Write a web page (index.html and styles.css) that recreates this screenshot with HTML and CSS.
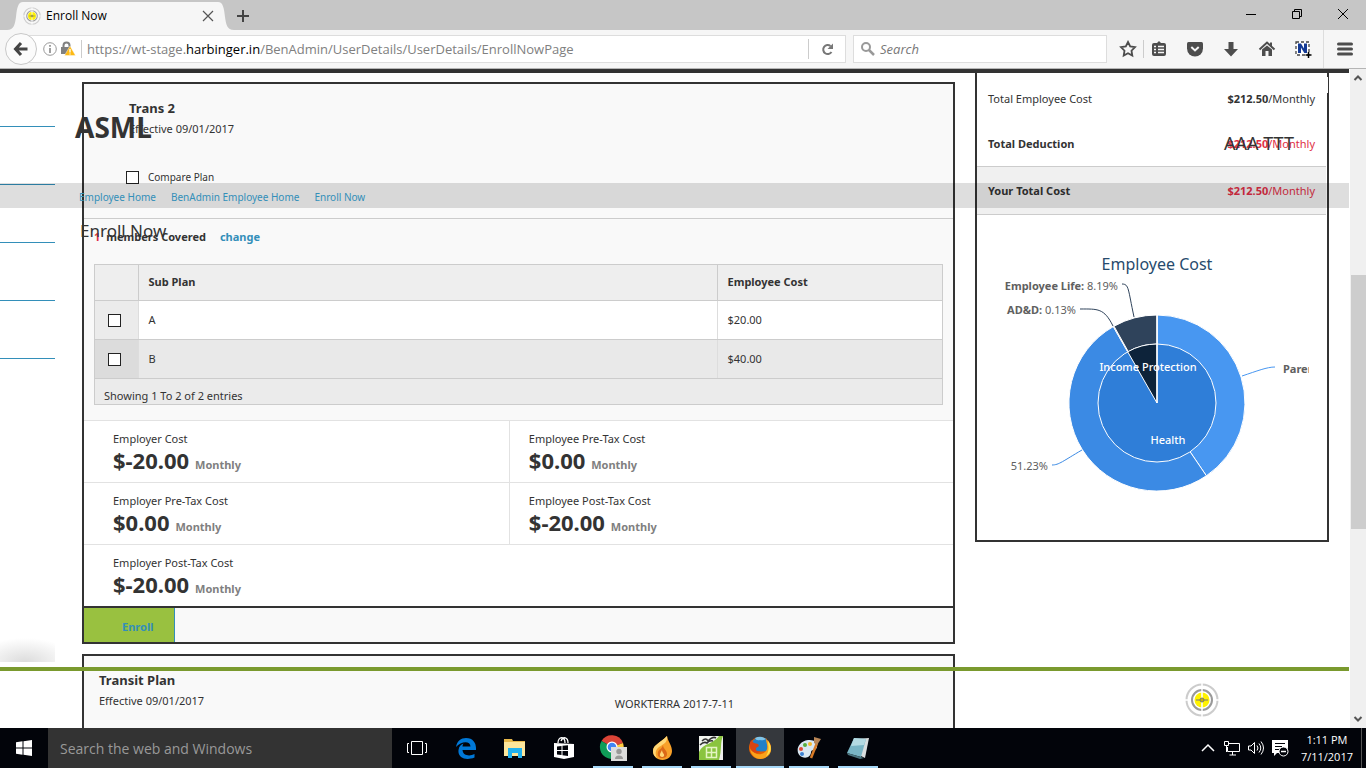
FILE: index.html
```html
<!DOCTYPE html>
<html lang="en">
<head>
    <meta charset="utf-8">
    <title>Enroll Now</title>
    <link rel="stylesheet" href="styles.css">
</head>
<body>
    <!-- browser window -->
    <div class="tabbar">
        <svg class="tab-edge" width="16" height="28" viewBox="0 0 16 28"><path d="M0 28C7 28 8 22 9 15C10 6 11 0 16 0V28Z" fill="#f6f6f6"/></svg>
        <div class="tab">
            <svg width="18" height="18" viewBox="0 0 34 34"><use href="#target"/></svg>
            <span class="tab-title">Enroll Now</span>
            <button class="plain" aria-label="Close tab"><svg width="12" height="12" viewBox="0 0 12 12"><path d="M1 1L11 11M11 1L1 11" stroke="#555" stroke-width="1.2"/></svg></button>
        </div>
        <svg class="tab-edge" width="16" height="28" viewBox="0 0 16 28"><path d="M16 28C9 28 8 22 7 15C6 6 5 0 0 0V28Z" fill="#f6f6f6"/></svg>
        <button class="plain new-tab" aria-label="New tab"><svg width="12" height="12" viewBox="0 0 12 12"><path d="M6 0V12M0 6H12" stroke="#444" stroke-width="2"/></svg></button>
        <div class="window-buttons">
            <button class="plain" aria-label="Minimize"><svg width="12" height="12" viewBox="0 0 12 12"><path d="M1 6.500H11" stroke="#000"/></svg></button>
            <button class="plain" aria-label="Restore"><svg width="12" height="12" viewBox="0 0 12 12"><path d="M1.500 3.500H8.500V10.500H1.500ZM3.500 3V1.500H10.500V8.500H9" stroke="#000" fill="none"/></svg></button>
            <button class="plain" aria-label="Close"><svg width="12" height="12" viewBox="0 0 12 12"><path d="M1 1L11 11M11 1L1 11" stroke="#000"/></svg></button>
        </div>
    </div>
    <div class="toolbar">
        <button class="back" aria-label="Back"><svg width="16" height="16" viewBox="0 0 16 16"><path d="M8 2L2.500 8L8 14M3 8H14.500" stroke="#444" stroke-width="3" fill="none"/></svg></button>
        <div class="address">
            <svg width="14" height="14" viewBox="0 0 14 14"><circle cx="7" cy="7" r="6.300" fill="none" stroke="#999"/><path d="M7 6V11M7 3V4.800" stroke="#888" stroke-width="1.600"/></svg>
            <svg width="16" height="16" viewBox="0 0 16 16"><path d="M3.500 7V4.500a3 3 0 0 1 6 0V7" fill="none" stroke="#808080" stroke-width="2"/><rect x="1" y="6" width="9" height="7" fill="#808080"/><path d="M10 5L15.500 14.500H4.500Z" fill="#fdb914" stroke="#fff" stroke-width=".4"/><path d="M10 8V11.500M10 12.500V13.500" stroke="#fff" stroke-width="1.300"/></svg>
            <div class="url" role="textbox" aria-label="Address">https://wt-stage.<span class="host">harbinger.in</span>/BenAdmin/UserDetails/UserDetails/EnrollNowPage</div>
            <button class="plain reload" aria-label="Reload"><svg width="13" height="13" viewBox="0 0 13 13"><path d="M10.500 9A4.500 4.500 0 1 1 9.500 3" stroke="#777" stroke-width="2" fill="none"/><path d="M12 0.500V6H6.500Z" fill="#777"/></svg></button>
        </div>
        <div class="search">
            <svg width="14" height="14" viewBox="0 0 14 14"><circle cx="5" cy="5" r="4" fill="none" stroke="#999" stroke-width="2"/><path d="M8 8L13 13" stroke="#999" stroke-width="2.500"/></svg>
            <input type="text" aria-label="Search" placeholder="Search">
        </div>
        <div class="tools">
            <button class="plain" aria-label="Bookmark"><svg width="18" height="18" viewBox="0 0 18 18"><path d="M9 2L11.200 6.500L16 7.200L12.500 10.700L13.300 15.500L9 13.200L4.700 15.500L5.500 10.700L2 7.200L6.800 6.500Z" fill="none" stroke="#4d4d4d" stroke-width="1.800"/></svg></button>
            <button class="plain" aria-label="Bookmarks list"><svg width="18" height="18" viewBox="0 0 18 18"><path d="M4 3H7L9 1L11 3H14Q16 3 16 5V14Q16 16 14 16H4Q2 16 2 14V5Q2 3 4 3Z" fill="#4d4d4d"/><path d="M4 6.500H6M8 6.500H14M4 9.500H6M8 9.500H14M4 12.500H6M8 12.500H14" stroke="#f6f6f6" stroke-width="1.700"/></svg></button>
            <button class="plain" aria-label="Pocket"><svg width="18" height="18" viewBox="0 0 18 18"><path d="M2.500 2H15.500Q17 2 17 3.500V8.500A8 8 0 0 1 1 8.500V3.500Q1 2 2.500 2Z" fill="#4d4d4d"/><path d="M5.300 7L9 10.400L12.700 7" fill="none" stroke="#f6f6f6" stroke-width="2"/></svg></button>
            <button class="plain" aria-label="Downloads"><svg width="18" height="18" viewBox="0 0 18 18"><path d="M6.500 2H11.500V9H16L9 16.500L2 9H6.500Z" fill="#4d4d4d"/></svg></button>
            <button class="plain" aria-label="Home"><svg width="18" height="18" viewBox="0 0 18 18"><path d="M1.500 9.500L9 2.500L16.500 9.500" stroke="#4d4d4d" stroke-width="2" fill="none"/><path d="M4 9.500L9 5.500L14 9.500V16H10.500V11H7.500V16H4ZM12 2.500H14V6H12Z" fill="#4d4d4d"/></svg></button>
            <button class="plain" aria-label="Clipper"><svg width="18" height="18" viewBox="0 0 18 18"><rect x="2" y="2" width="13" height="13" fill="#fff" stroke="#444" stroke-width="1.300" stroke-dasharray="3 2"/><path d="M4 13V3.500H7L10 8.500V3.500H13V13H10.300L7 7.500V13Z" fill="#143a94"/><path d="M14.500 12V18M11.500 15H17.500" stroke="#000" stroke-width="1.500"/></svg></button>
            <button class="plain menu" aria-label="Menu"><svg width="18" height="18" viewBox="0 0 18 18"><path d="M2.500 4H15.500M2.500 9H15.500M2.500 14H15.500" stroke="#4d4d4d" stroke-width="3" stroke-linecap="round"/></svg></button>
        </div>
    </div>

    <div class="viewport">
        <div class="page">
            <ul class="sidebar">
                <li></li><li></li><li></li><li></li><li></li>
            </ul>
            <main>
                <section class="plan">
                    <div class="plan-head">
                        <h3>Trans 2</h3>
                        <p>Effective 09/01/2017</p>
                        <div class="compare">
                            <input type="checkbox" id="compare"><label for="compare">Compare Plan</label>
                        </div>
                    </div>
                    <div class="plan-body">
                        <div class="members"><span class="red">1</span> <span>members Covered</span> <a href="#">change</a></div>
                        <div class="grid-box">
                            <table>
                                <thead>
                                    <tr><th class="check"></th><th>Sub Plan</th><th class="cost">Employee Cost</th></tr>
                                </thead>
                                <tbody>
                                    <tr><td class="check"><input type="checkbox" aria-label="A"></td><td>A</td><td>$20.00</td></tr>
                                    <tr><td class="check"><input type="checkbox" aria-label="B"></td><td>B</td><td>$40.00</td></tr>
                                </tbody>
                            </table>
                            <p class="entries">Showing 1 To 2 of 2 entries</p>
                        </div>
                    </div>
                    <div class="costs">
                        <div class="cost-item"><span>Employer Cost</span><div><strong>$-20.00</strong> <small>Monthly</small></div></div>
                        <div class="cost-item"><span>Employee Pre-Tax Cost</span><div><strong>$0.00</strong> <small>Monthly</small></div></div>
                        <div class="cost-item"><span>Employer Pre-Tax Cost</span><div><strong>$0.00</strong> <small>Monthly</small></div></div>
                        <div class="cost-item"><span>Employee Post-Tax Cost</span><div><strong>$-20.00</strong> <small>Monthly</small></div></div>
                        <div class="cost-item last"><span>Employer Post-Tax Cost</span><div><strong>$-20.00</strong> <small>Monthly</small></div></div>
                    </div>
                    <div class="actions"><a class="enroll" href="#">Enroll</a></div>
                </section>
                <section class="plan">
                    <div class="plan-head next">
                        <h3>Transit Plan</h3>
                        <p>Effective 09/01/2017</p>
                    </div>
                </section>
            </main>
            <aside>
                <div class="sum"><span>Total Employee Cost</span><span><b>$212.50</b>/Monthly</span></div>
                <div class="sum"><b>Total Deduction</b><span class="red"><b>$212.50</b>/Monthly</span></div>
                <div class="sum total"><b>Your Total Cost</b><span class="red"><b>$212.50</b>/Monthly</span></div>
                <svg class="chart" width="304" height="325" viewBox="0 0 304 325">
                    <text x="152" y="55" text-anchor="middle" class="chart-title">Employee Cost</text>
                    <g stroke="#fff">
                        <path d="M152 188V100A88 88 0 0 1 201.400 260.800Z" fill="#4897f1"/>
                        <path d="M152 188L201.400 260.800A88 88 0 1 1 108.300 111.600Z" fill="#3b8ae4"/>
                        <path d="M152 188L108.300 111.600A88 88 0 0 1 109 111.200Z" fill="#2f4259"/>
                        <path d="M152 188L109 111.200A88 88 0 0 1 152 100Z" fill="#2f435b"/>
                        <circle cx="152" cy="188" r="59" fill="#2f7ed8"/>
                        <path d="M152 188L122.700 136.800A59 59 0 0 1 152 129Z" fill="#0d233a"/>
                        <path d="M152 188V100" stroke-width="1.500"/>
                    </g>
                    <g fill="none">
                        <path d="M117 69C124 69 123 74 129 102" stroke="#2f435b"/>
                        <path d="M75 94C93 94 99 93 108 111" stroke="#2f435b"/>
                        <path d="M237 161C252 156 262 152 270 152" stroke="#4897f1"/>
                        <path d="M47 250C54 250 58 246 77 235" stroke="#3b8ae4"/>
                    </g>
                    <g class="chart-label">
                        <text x="113" y="75" text-anchor="end"><tspan class="bold">Employee Life:</tspan> 8.19%</text>
                        <text x="71" y="99" text-anchor="end"><tspan class="bold">AD&amp;D:</tspan> 0.13%</text>
                        <text x="278" y="158" class="bold">Parent Medical</text>
                        <text x="43" y="255" text-anchor="end">51.23%</text>
                        <text x="143" y="156" text-anchor="middle" class="in-pie">Income Protection</text>
                        <text x="163" y="229" text-anchor="middle" class="in-pie">Health</text>
                    </g>
                </svg>
            </aside>

            <!-- fixed header and footer layers -->
            <h1 class="company">ASML</h1>
            <div class="user">AAA TTT</div>
            <nav class="breadcrumbs">
                <a href="#">Employee Home</a>
                <a href="#">BenAdmin Employee Home</a>
                <a href="#">Enroll Now</a>
            </nav>
            <h2 class="page-title">Enroll Now</h2>
            <div class="top-menu"></div>
            <div class="menu-shadow"></div>
            <footer>
                <span></span>
                <span class="copyright">WORKTERRA 2017-7-11</span>
                <svg width="34" height="34" viewBox="0 0 34 34">
                    <g id="target" fill="none">
                        <circle cx="17" cy="17" r="15.500" stroke="#ccc" stroke-width="2"/>
                        <circle cx="17" cy="17" r="7.500" fill="#fff200"/>
                        <circle cx="17" cy="17" r="10" stroke="#999" stroke-width="2"/>
                        <path d="M17 0V34M0 17H6M28 17H34" stroke="#fff" stroke-width="1.500"/>
                        <path d="M11 17H23" stroke="#777"/>
                        <circle cx="17" cy="17" r="2" fill="#c9b800" stroke="#777"/>
                    </g>
                </svg>
            </footer>
        </div>
        <div class="scrollbar">
            <svg width="10" height="8" viewBox="0 0 10 8"><path d="M1.500 6L5 2.500L8.500 6" fill="none" stroke="#555" stroke-width="2"/></svg>
            <div class="thumb"></div>
            <svg width="10" height="8" viewBox="0 0 10 8"><path d="M1.500 2L5 5.500L8.500 2" fill="none" stroke="#555" stroke-width="2"/></svg>
        </div>
    </div>

    <div class="taskbar">
        <button class="task start" aria-label="Start"><svg width="16" height="16" viewBox="0 0 16 16"><path d="M0 2.200L6.500 1.300V7.500H0ZM7.500 1.200L16 0V7.500H7.500ZM0 8.500H6.500V14.700L0 13.800ZM7.500 8.500H16V16L7.500 14.800Z" fill="#fff"/></svg></button>
        <input class="task-search" type="text" aria-label="Search the web and Windows" placeholder="Search the web and Windows">
        <div class="tasks">
            <button class="task" aria-label="Task view"><svg width="24" height="24" viewBox="0 0 24 24"><path d="M6.500 5.500H17.500V18.500H6.500ZM4 7.500H2.500V16.500H4M20 7.500H21.500V16.500H20" fill="none" stroke="#fff"/></svg></button>
            <button class="task" aria-label="Edge"><svg width="24" height="24" viewBox="0 0 24 24"><path d="M2 11C3 5 7 2 12 2C19 2 22 7 22 12V14H8.500C9 20 16 20.500 20.500 18V21.500C12 25 3.500 22 4.500 14C5 10 7.500 8 9.500 7.500C8.700 8.500 8.500 9.500 8.500 10.500H16.500C16.500 4.500 7 5 2 11Z" fill="#0078d7"/></svg></button>
            <button class="task" aria-label="File Explorer"><svg width="24" height="24" viewBox="0 0 24 24"><path d="M1 3H9L10 5H22V20H1Z" fill="#e8b84a"/><path d="M1 6H22V20H1Z" fill="#fde69a"/><path d="M5 12H19V22H15V17H9V22H5Z" fill="#22b2ee"/></svg></button>
            <button class="task" aria-label="Store"><svg width="24" height="24" viewBox="0 0 24 24"><path d="M2 7L22 8V21L12 23L2 21Z" fill="#fff"/><path d="M6 7C6 0 13 0 13 7M9 5C11 0 16 1 16 7" stroke="#fff" stroke-width="1.300" fill="none"/><path d="M5 10.500L9.500 10V14H5ZM10.500 9.800L16 9.200V14H10.500ZM5 15H9.500V19L5 18.500ZM10.500 15H16V20L10.500 19.200Z" fill="#02040a"/></svg></button>
            <button class="task open" aria-label="Chrome"><svg width="28" height="26" viewBox="0 0 28 26"><path d="M13 12L2.500 6A12 12 0 0 1 24 8Z" fill="#db4437"/><path d="M13 12L2.500 6A12 12 0 0 0 12 24Z" fill="#0f9d58"/><path d="M13 12L24 8A12 12 0 0 1 12 24Z" fill="#ffcd40"/><circle cx="13" cy="12" r="5.500" fill="#fff"/><circle cx="13" cy="12" r="4.300" fill="#4285f4"/><path d="M12 12H28V26H12Z" fill="#ddd"/><circle cx="20" cy="16.500" r="2.700" fill="#999"/><path d="M16 24Q16 20.500 20 20.500T24 24Z" fill="#999"/></svg></button>
            <button class="task open" aria-label="Flame"><svg width="24" height="24" viewBox="0 0 24 24"><path d="M17 0C18 6 22 9 22 15C22 20 18 24 12.500 24S3 20 3 15C3 9 10 7 17 0Z" fill="#f8a12a"/><path d="M17 0C18 6 14 8 9 11C5 14 5 18 7 22C4 20 3 18 3 15C3 9 10 7 17 0Z" fill="#ffd776"/><path d="M13 9C13 13 17 14 17 18C17 21 15 22 12 22S7 20 8 16C9 13 12 13 13 9Z" fill="#db6918"/><path d="M12 14C12 17 15 18 14 20S9 21 10 18Z" fill="#ffd776"/></svg></button>
            <button class="task open" aria-label="Spreadsheet"><svg width="24" height="24" viewBox="0 0 24 24"><path d="M0 0H24V24H0Z" fill="#8ac43f"/><path d="M0 0H20C15 8 4 7 0 16Z" fill="#f1f4ef"/><path d="M24 0V24H20C23 14 21 6 24 0Z" fill="#eee"/><path d="M3 5Q7 1 9 5Q14 0 17 2M1 9Q5 5 8 7Q10 4 14 5" fill="none" stroke="#333" stroke-width="1.600"/><path d="M7.500 11.500H17.500V21.500H7.500ZM12.500 11.500V21.500M7.500 16.500H17.500" fill="none" stroke="#e4f5c2" stroke-width="1.500"/></svg></button>
            <button class="task open active" aria-label="Firefox"><svg width="24" height="24" viewBox="0 0 24 24"><circle cx="12" cy="12" r="11" fill="#e66000"/><path d="M4 6A10 10 0 0 1 20 5L19 15L8 16Z" fill="#2380c7"/><path d="M7 2Q13 -1 18 3Q15 5 12 4Q8 5 7 2Z" fill="#7cc3e9"/><path d="M18 3C25 9 25 18 17 22C9 25 3 20 2 13C6 18 13 21 18 15C21 11 18 7 18 3Z" fill="#f9a21b"/><path d="M20 5C24 10 24 17 18 20C22 14 20 10 20 5Z" fill="#ffe14d"/><path d="M3 4L6 7L10 8L11 10L8 12Q7 16 13 15Q9 19 4 15Q0 10 3 4Z" fill="#d94412"/></svg></button>
            <button class="task open" aria-label="Paint"><svg width="26" height="24" viewBox="0 0 26 24"><path d="M12 4C20 3 23 9 20 13C18 15 16 13 15 16C15 20 11 23 6 21C-1 18 0 6 12 4Z" fill="#d8e7f2"/><circle cx="5" cy="13" r="2" fill="#e04a35"/><circle cx="9" cy="9" r="2" fill="#56ad3c"/><circle cx="14" cy="8" r="2" fill="#f5b82e"/><circle cx="6" cy="18" r="2" fill="#3a80d2"/><path d="M21 7L15 22" stroke="#d77b27" stroke-width="2.500"/><path d="M18 1L25 3L21 9L18 7Z" fill="#b78455"/></svg></button>
            <button class="task open" aria-label="Notepad"><svg width="24" height="24" viewBox="0 0 24 24"><path d="M9 3L23 2L19 22L15 20Z" fill="#d9dedf"/><path d="M8 2L20 3L15 21L1 17Z" fill="#79b5c5"/><path d="M8 2L20 3L18 9L5 10Z" fill="#b4dae2"/><path d="M1 17L15 21L18 22L14 23L2 19Z" fill="#49747f"/></svg></button>
        </div>
        <div class="tray">
            <svg width="18" height="18" viewBox="0 0 18 18"><path d="M3 12L9 6L15 12" fill="none" stroke="#fff" stroke-width="1.500"/></svg>
            <svg width="18" height="18" viewBox="0 0 18 18"><path d="M5.500 4.500H16.500V12.500H4.500V8M9.500 12.500V16M6.500 16H13M1.500 2.500H5.500V6.500H1.500ZM3.500 6.500V13" fill="none" stroke="#fff"/></svg>
            <svg width="18" height="18" viewBox="0 0 18 18"><path d="M1.500 7H4L7.500 3.500V14.500L4 11H1.500ZM10 6.500Q12 9 10 11.500M12 4.500Q15.500 9 12 13.500M14 2.500Q19 9 14 15.500" fill="none" stroke="#fff"/></svg>
            <svg width="18" height="18" viewBox="0 0 18 18"><path d="M1 1H17V14H6L3 17V14H1Z" fill="#fff"/><path d="M4 4.500H14M4 7.500H11M4 10.500H8" stroke="#02040a"/><circle cx="12.500" cy="12.500" r="4.500" fill="#02040a" stroke="#fff"/><path d="M10 12.500H15" stroke="#fff" stroke-width="1.500"/></svg>
            <div class="clock"><div>1:11 PM</div><div>7/11/2017</div></div>
        </div>
    </div>
</body>
</html>
```
FILE: styles.css
```css
* {
    box-sizing: border-box;
}
body {
    margin: 0;
    height: 100vh;
    display: flex;
    flex-direction: column;
    overflow: hidden;
    font-family: "Noto Sans", "Open Sans", sans-serif;
    font-size: 11px;
    line-height: 18px;
    color: #333;
    background: #fff;
}
h1, h2, h3, p, ul {
    margin: 0;
    padding: 0;
}
a {
    color: #338fb9;
    text-decoration: none;
}
svg {
    flex: none;
    display: block;
}
.plain {
    border: 0;
    background: none;
    padding: 0;
}

/* browser window */
.tabbar {
    flex: none;
    height: 30px;
    display: flex;
    align-items: flex-end;
    background: #c6c6c6;
    padding-left: 7px;
}
.tab {
    width: 195px;
    height: 28px;
    display: flex;
    align-items: center;
    gap: 5px;
    padding-right: 4px;
    background: #f6f6f6;
    font-family: "Open Sans", sans-serif;
    font-size: 12px;
    color: #000;
}
.tab-title {
    flex: 1;
}
.new-tab {
    margin: 0 0 8px 3px;
}
.window-buttons {
    display: flex;
    gap: 34px;
    margin: 0 17px 10px auto;
}
.toolbar {
    flex: none;
    height: 39px;
    display: flex;
    align-items: center;
    background: #f6f6f6;
    border-bottom: 1px solid #b5b5b5;
    padding-left: 5px;
}
.back {
    width: 32px;
    height: 32px;
    border: 1px solid #c8c8c8;
    border-radius: 50%;
    background: #fbfbfb;
    padding: 0 0 0 7px;
    z-index: 1;
}
.address {
    flex: 1;
    height: 28px;
    display: flex;
    align-items: center;
    gap: 3px;
    margin-left: -14px;
    padding-left: 19px;
    background: #fff;
    border: 1px solid #ddd;
}
.url {
    flex: 1;
    border-left: 1px solid #ccc;
    margin-left: 2px;
    padding-left: 5px;
    font-family: "Open Sans", sans-serif;
    font-size: 13px;
    color: #808080;
    white-space: nowrap;
}
.host {
    color: #000;
}
.reload {
    width: 37px;
    height: 20px;
    border-left: 1px solid #ccc;
    padding-left: 12px;
}
.search {
    width: 254px;
    height: 28px;
    margin-left: 7px;
    padding-left: 7px;
    display: flex;
    align-items: center;
    gap: 5px;
    background: #fff;
    border: 1px solid #ddd;
}
.search input {
    flex: 1;
    min-width: 0;
    border: 0;
    padding: 0;
    font-family: "Open Sans", sans-serif;
    font-size: 13px;
    font-style: italic;
}
.search input::placeholder {
    color: #777;
}
.tools {
    display: flex;
    align-items: center;
    gap: 18px;
    padding: 0 12px;
}
.tools button:first-child {
    padding-right: 6px;
    border-right: 1px solid #ccc;
    margin-right: -12px;
}
.tools .menu {
    height: 38px;
    border-left: 1px solid #ddd;
    padding-left: 12px;
    margin-left: -7px;
}

/* page */
.viewport {
    flex: 1;
    min-height: 0;
    display: flex;
}
.page {
    flex: 1;
    position: relative;
    display: flex;
    align-items: flex-start;
    overflow: hidden;
    border-top: 4px solid #333;
    padding-right: 20px;
}
.sidebar {
    width: 55px;
    list-style: none;
    margin-top: -4px;
}
.sidebar li {
    height: 58px;
    border-bottom: 1px solid #338fb9;
}
main {
    flex: 1;
    padding-top: 9px;
    margin: 0 20px 0 27px;
}
.plan {
    border: 2px solid #333;
    background: #f9f9f9;
    margin-bottom: 10px;
}
.plan-head {
    height: 135px;
    border-bottom: 1px solid #ccc;
    padding: 12px 45px;
}
.plan-head h3 {
    font-size: 13px;
    line-height: 24px;
}
.plan-head.next {
    padding: 12px 15px;
}
input[type=checkbox] {
    appearance: none;
    width: 13px;
    height: 13px;
    margin: 0;
    border: 1px solid #222;
    background: #fff;
    vertical-align: middle;
}
.compare {
    display: flex;
    align-items: center;
    gap: 9px;
    margin: 30px 0 0 -3px;
    font-size: 10px;
}
.plan-body {
    padding: 9px 10px 15px;
}
.members {
    display: flex;
    gap: 6px;
    font-weight: bold;
    margin-bottom: 18px;
}
.members a {
    margin-left: 8px;
}
.red {
    color: #e02f46;
}
.grid-box {
    border: 1px solid #ccc;
    background: #ebebeb;
}
table {
    width: 100%;
    border-collapse: collapse;
}
th, td {
    height: 39px;
    padding: 0 10px;
    text-align: left;
    border-bottom: 1px solid #ccc;
}
th {
    height: 35px;
    background: #eee;
    border-right: 1px solid #ccc;
}
td {
    background: #fff;
    border-right: 1px solid #ddd;
}
tr:nth-child(even) td {
    background: #e9e9e9;
}
th:last-child, td:last-child {
    border-right: 0;
}
.check {
    width: 43px;
    padding-left: 13px;
    padding-right: 0;
}
td.check {
    background: #ebebeb;
}
tr:nth-child(even) td.check {
    background: #dcdcdc;
}
.cost {
    width: 225px;
}
.entries {
    padding: 9px 9px 0;
    line-height: 16px;
}
.costs {
    display: grid;
    grid-template-columns: 49fr 51fr;
    background: #fff;
}
.cost-item {
    height: 62px;
    border-top: 1px solid #e2e2e2;
    padding: 9px 19px;
}
.cost-item:nth-child(odd) {
    padding-left: 29px;
    border-right: 1px solid #e2e2e2;
}
.costs .last {
    grid-column: 1 / 3;
    border-right: 0;
}
.cost-item span {
    display: block;
}
.cost-item div {
    line-height: 24px;
}
.cost-item strong {
    font-size: 22px;
}
.cost-item small {
    font-size: 11px;
    font-weight: bold;
    color: #808080;
    margin-left: 3px;
}
.actions {
    height: 36px;
    border-top: 2px solid #333;
    display: flex;
}
.enroll {
    width: 91px;
    background: #99c140;
    border-right: 1px solid #338fb9;
    padding: 0 20px 0 38px;
    font-weight: bold;
    line-height: 38px;
}

/* cost summary */
aside {
    width: 354px;
    border: 2px solid #333;
    border-top: 0;
    background: #fff;
}
.sum {
    height: 45px;
    display: flex;
    justify-content: space-between;
    align-items: center;
    padding: 0 11px;
    margin-right: 1px;
}
.sum:first-child {
    margin-top: 3px;
}
.total {
    height: 49px;
    background: #f0f0f0;
    border-top: 1px solid #ccc;
    border-bottom: 1px solid #ccc;
}
.chart {
    margin-left: 28px;
}
.chart-title {
    font-size: 16px;
    fill: #274b6d;
}
.chart-label {
    font-size: 11px;
    fill: #606060;
}
.bold {
    font-weight: bold;
}
.in-pie {
    fill: #fff;
    font-weight: 500;
}

/* layers lying over the scrolled content */
.company {
    position: absolute;
    top: 36px;
    left: 75px;
    font-size: 28px;
    line-height: 36px;
}
.user {
    position: absolute;
    top: 58px;
    right: 55px;
    font-size: 18px;
    line-height: 24px;
}
.breadcrumbs {
    position: absolute;
    top: 110px;
    left: 0;
    right: 0;
    height: 25px;
    display: flex;
    align-items: center;
    gap: 15px;
    padding: 3px 0 0 79px;
    font-size: 10px;
    background: rgba(0, 0, 0, 0.13);
}
.page-title {
    position: absolute;
    top: 146px;
    left: 80px;
    font-size: 17px;
    font-weight: normal;
    line-height: 24px;
}
.top-menu {
    position: absolute;
    top: 4px;
    right: 21px;
    width: 1px;
    height: 16px;
    background: #fff;
}
.menu-shadow {
    position: absolute;
    left: 0;
    bottom: 66px;
    width: 55px;
    height: 24px;
    background: radial-gradient(50px 24px at 25px 100%, #dcdcdc, #e8e8e8 35%, #fff);
}
footer {
    position: absolute;
    left: 0;
    right: 0;
    bottom: 0;
    height: 61px;
    border-top: 4px solid #7a9a2e;
    display: grid;
    grid-template-columns: 1fr auto 1fr;
    justify-items: end;
    align-items: center;
    padding: 0 130px;
}
.copyright {
    padding-top: 8px;
}
.scrollbar {
    width: 17px;
    background: #f0f0f0;
    border-left: 1px solid #fff;
    display: flex;
    flex-direction: column;
    align-items: center;
    justify-content: space-between;
    padding: 5px 0;
}
.thumb {
    width: 15px;
    height: 39%;
    background: #cdcdcd;
    margin-top: 7px;
}

/* taskbar */
.taskbar {
    flex: none;
    height: 40px;
    display: flex;
    background: #02040a;
    color: #fff;
    font-family: "Open Sans", sans-serif;
    font-size: 11px;
}
.task {
    width: 48px;
    border: 0;
    background: none;
    padding: 0;
    display: flex;
    align-items: center;
    justify-content: center;
}
.task-search {
    width: 344px;
    border: 0;
    background: #333;
    padding: 0 12px;
    font-family: "Open Sans", sans-serif;
    font-size: 14px;
}
.task-search::placeholder {
    color: #999;
}
.tasks {
    display: flex;
    gap: 1px;
    margin-left: 1px;
}
.open {
    background: linear-gradient(#a6d8f8, #a6d8f8) center bottom / 40px 2px no-repeat;
}
.active {
    background: linear-gradient(#a6d8f8, #a6d8f8) center bottom / 48px 2px no-repeat #35383d;
}
.tray {
    margin-left: auto;
    display: flex;
    align-items: center;
    gap: 6px;
    border-right: 1px solid #555;
    margin-right: 4px;
    padding-right: 8px;
}
.clock {
    text-align: center;
    line-height: 17px;
    margin-left: 6px;
}
```
